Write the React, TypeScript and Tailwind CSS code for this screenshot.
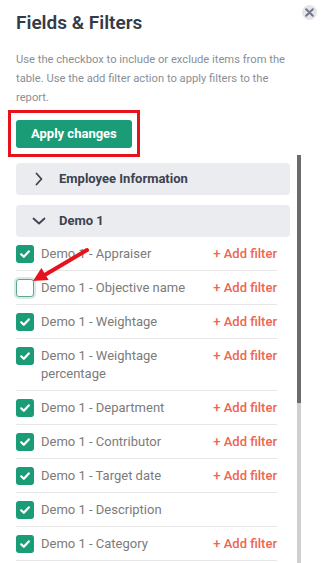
import React from 'react';

type Field = { label: string; checked: boolean; filter: boolean };

const fields: Field[] = [
  { label: 'Demo 1 - Appraiser', checked: true, filter: true },
  { label: 'Demo 1 - Objective name', checked: false, filter: true },
  { label: 'Demo 1 - Weightage', checked: true, filter: true },
  { label: 'Demo 1 - Weightage percentage', checked: true, filter: true },
  { label: 'Demo 1 - Department', checked: true, filter: true },
  { label: 'Demo 1 - Contributor', checked: true, filter: true },
  { label: 'Demo 1 - Target date', checked: true, filter: true },
  { label: 'Demo 1 - Description', checked: true, filter: false },
  { label: 'Demo 1 - Category', checked: true, filter: true },
];

const Checkbox = ({ checked }: { checked: boolean }) =>
  checked ? (
    <span className="w-[18px] h-[18px] shrink-0 rounded-[3px] bg-[#1a9c77] flex items-center justify-center">
      <svg width="12" height="12" viewBox="0 0 12 12" fill="none">
        <path d="M2.2 6.3 4.8 8.8 9.8 3.4" stroke="#fff" strokeWidth="2.2" strokeLinecap="round" strokeLinejoin="round" />
      </svg>
    </span>
  ) : (
    <span className="w-[18px] h-[18px] shrink-0 rounded-[3px] bg-white border-[1.5px] border-[#5ea792] shadow-[0_0_0_2px_#d6ebe5]" />
  );

const Chevron = ({ open }: { open: boolean }) => (
  <svg width="14" height="14" viewBox="0 0 14 14" fill="none" className="shrink-0">
    {open ? (
      <path d="M1.5 4.5 7 9.5 12.5 4.5" stroke="#3c4350" strokeWidth="1.8" strokeLinecap="round" strokeLinejoin="round" />
    ) : (
      <path d="M4.5 1.5 9.5 7 4.5 12.5" stroke="#3c4350" strokeWidth="1.8" strokeLinecap="round" strokeLinejoin="round" />
    )}
  </svg>
);

const SectionHeader = ({ title, open }: { title: string; open: boolean }) => (
  <div className="h-8 rounded-[4px] bg-[#ebecf0] flex items-center pl-[16px] gap-[13px]">
    <Chevron open={open} />
    <span className="text-[13px] font-bold text-[#3c4350]">{title}</span>
  </div>
);

export default function App() {
  return (
    <div className="relative w-[324px] h-[563px] overflow-hidden bg-white flex flex-col font-['Roboto',sans-serif]">
      {/* Header */}
      <div className="flex justify-between items-start pl-4">
        <h1 className="pt-[11px] text-[19px] leading-6 font-semibold text-[#333b47]">Fields &amp; Filters</h1>
        <button className="mt-[5px] mr-[7px] w-[15px] h-[15px] rounded-full bg-[#e3e5ea] flex items-center justify-center">
          <svg width="9" height="9" viewBox="0 0 9 9" fill="none">
            <path d="M1.2 1.2 7.8 7.8M7.8 1.2 1.2 7.8" stroke="#6f7886" strokeWidth="2" strokeLinecap="round" />
          </svg>
        </button>
      </div>

      <p className="pl-4 pr-[20px] mt-[15px] text-[11.2px] leading-[19px] text-[#8a8f96]">
        Use the checkbox to include or exclude items from the table. Use the add filter action to apply filters to the report.
      </p>

      {/* Apply */}
      <div className="pl-4 mt-[13px]">
        <div className="relative w-fit">
          <button className="h-7 px-[15px] rounded-[3px] bg-[#1a9c77] text-white text-[13px] font-bold">Apply changes</button>
          <div className="absolute -left-[8px] -top-[10px] -right-[8px] -bottom-[9px] border-[3px] border-[#e8121c]" />
        </div>
      </div>

      {/* Scroll area */}
      <div className="flex-1 min-h-0 mt-[7px] flex">
        <div className="w-[290px] pl-4 pt-2 flex flex-col gap-[10px]">
          <SectionHeader title="Employee Information" open={false} />
          <div>
            <SectionHeader title="Demo 1" open={true} />
            <div className="w-[261px]">
              {fields.map((f) => (
                <div key={f.label} className="flex items-start pt-2 pb-[7px] border-b border-[#e6e6e6]">
                  <Checkbox checked={f.checked} />
                  <span className="ml-[7px] flex-1 min-w-0 text-[13px] leading-[18px] text-[#7b7b7b]">{f.label}</span>
                  {f.filter && (
                    <span className="ml-2 shrink-0 text-[13px] leading-[18px] font-medium text-[#ee6652]">+ Add filter</span>
                  )}
                </div>
              ))}
            </div>
          </div>
        </div>
        <div className="ml-[7px] w-1 flex flex-col bg-[#cfcfcf]">
          <div className="h-[248px] bg-[#6b6b6b]" />
        </div>
      </div>

      {/* Annotation arrow */}
      <svg className="absolute left-0 top-0 pointer-events-none" width="324" height="563" viewBox="0 0 324 563">
        <line x1="87" y1="250" x2="43" y2="276" stroke="#e8121c" strokeWidth="4" strokeLinecap="round" />
        <polygon points="33,281 41.4,267.9 48.6,279.9" fill="#e8121c" />
      </svg>
    </div>
  );
}
